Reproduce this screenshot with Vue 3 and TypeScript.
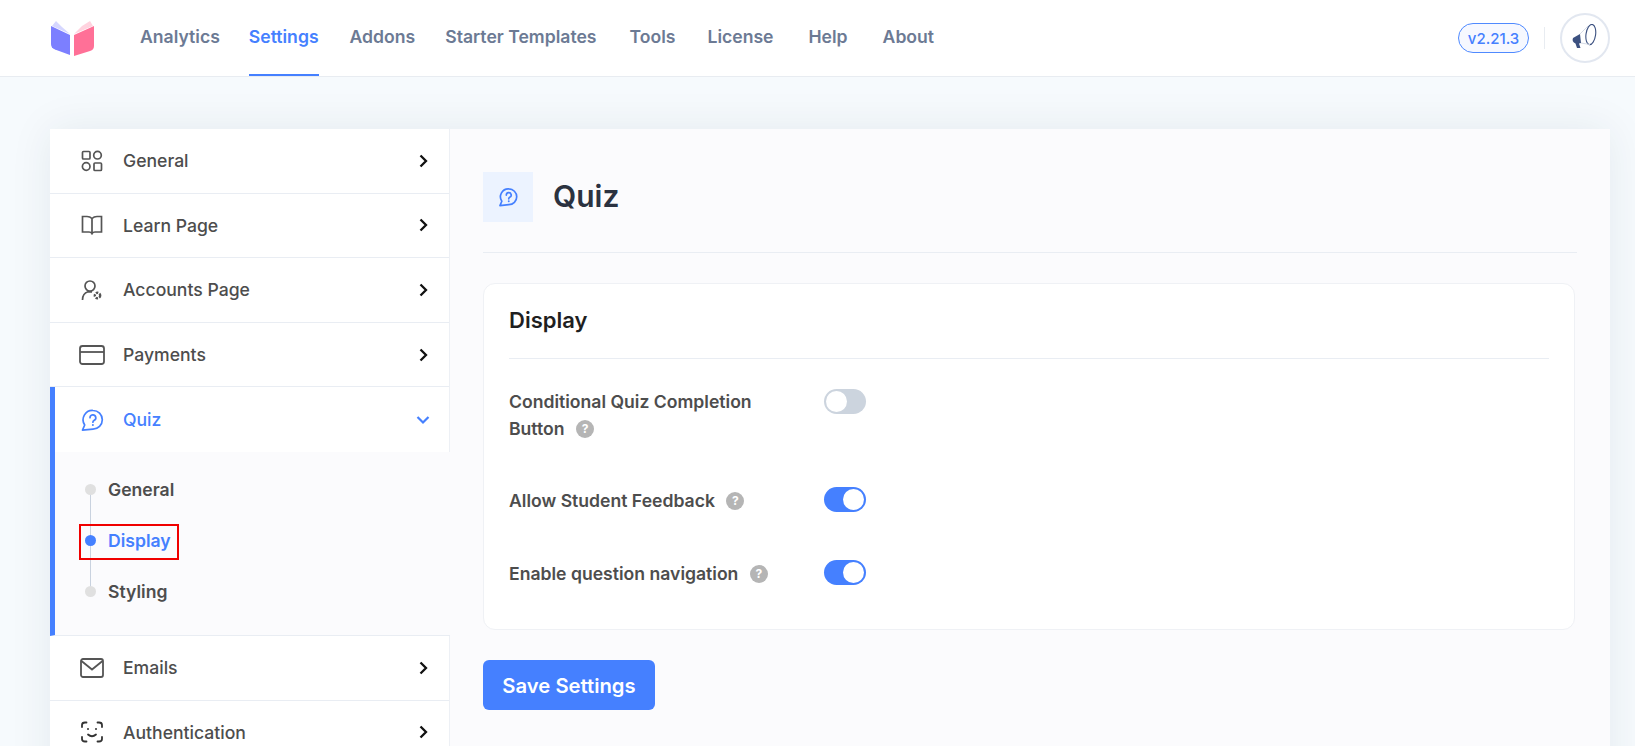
<script setup lang="ts">
interface NavItem { label: string; gap: number; active?: boolean }
const nav: NavItem[] = [
  { label: 'Analytics', gap: 0 },
  { label: 'Settings', gap: 29 },
  { label: 'Addons', gap: 31 },
  { label: 'Starter Templates', gap: 30 },
  { label: 'Tools', gap: 33 },
  { label: 'License', gap: 32 },
  { label: 'Help', gap: 35 },
  { label: 'About', gap: 35 },
]
nav[1].active = true
const topItems = [
  { label: 'General', icon: 'grid' },
  { label: 'Learn Page', icon: 'book' },
  { label: 'Accounts Page', icon: 'user' },
  { label: 'Payments', icon: 'card' },
]
const bottomItems = [
  { label: 'Emails', icon: 'mail' },
  { label: 'Authentication', icon: 'face' },
]
const subItems = [
  { label: 'General', active: false },
  { label: 'Display', active: true },
  { label: 'Styling', active: false },
]
const settings = [
  { label: 'Conditional Quiz Completion Button', on: false, cls: 'first' },
  { label: 'Allow Student Feedback', on: true, cls: 'second' },
  { label: 'Enable question navigation', on: true, cls: 'third' },
]
</script>

<template>
  <div class="page">
    <header class="topbar">
      <svg class="logo" width="44" height="36" viewBox="0 0 44 36" aria-hidden="true">
        <path d="M1 6 L20 15 L20 35 L5 29.500 Q1 28 1 24 Z" fill="#7c7fff" />
        <path d="M44 6 L24 15 L24 36 L40 31 Q44 30 44 26 Z" fill="#ff7097" />
        <path d="M2 6 L6 1 L12 7 L20 14 Z" fill="#d6d7ff" />
        <path d="M43 6 L40 1 L32 6 L24 14 Z" fill="#ffd3df" />
      </svg>
      <nav class="nav">
        <a
          v-for="item in nav"
          :key="item.label"
          class="nav-item"
          :class="{ active: item.active }"
          :style="{ marginLeft: item.gap + 'px' }"
        >{{ item.label }}</a>
      </nav>
      <div class="top-right">
        <span class="version">v2.21.3</span>
        <span class="vline"></span>
        <span class="avatar">
          <svg width="28" height="28" viewBox="0 0 28 28" aria-hidden="true">
            <ellipse cx="19.800" cy="10.500" rx="4.800" ry="10.200" transform="rotate(8 19.800 10.500)" fill="none" stroke="#3c5180" stroke-width="1.100" />
            <path d="M2 14 L9 10 L10 19 L8 19.500 L9.500 24 L6 24 L4.500 19.500 Q0.500 17.500 2 14 Z" fill="#3c5180" />
            <path d="M9 10 L17 2 M10 19 L19 20.500" stroke="#d5dbe6" stroke-width="1" fill="none" />
          </svg>
        </span>
      </div>
    </header>

    <main class="main">
      <div class="panel">
        <aside class="sidebar">
          <a v-for="item in topItems" :key="item.label" class="row">
            <span class="row-icon">
              <svg width="26" height="26" viewBox="0 0 26 26" fill="none" stroke="#555" stroke-width="1.700" aria-hidden="true">
                <template v-if="item.icon === 'grid'">
                  <rect x="3.500" y="3.500" width="7.500" height="7.500" rx="1" />
                  <circle cx="18.500" cy="7.200" r="3.800" />
                  <circle cx="7.200" cy="18.500" r="3.800" />
                  <rect x="15" y="15" width="7.500" height="7.500" rx="1" />
                </template>
                <template v-else-if="item.icon === 'book'">
                  <path d="M13 6.500 Q11 4.500 8 4.500 H3.500 V20 H10 Q12 20 13 21.500 Q14 20 16 20 H22.500 V4.500 H18 Q15 4.500 13 6.500 Z M13 6.500 V22.500" />
                </template>
                <template v-else-if="item.icon === 'user'">
                  <circle cx="11" cy="9" r="5" />
                  <path d="M3.500 23 Q3.500 16.500 9 14.800 L13 14.800" />
                  <circle cx="18.500" cy="18.500" r="2.700" stroke-width="2.400" stroke-dasharray="2.400 1.200" />
                </template>
                <template v-else-if="item.icon === 'card'">
                  <rect x="1" y="4" width="24" height="18" rx="2.500" stroke-width="1.800" />
                  <path d="M1 10 H25" stroke-width="1.800" />
                </template>
              </svg>
            </span>
            <span class="row-label">{{ item.label }}</span>
            <svg class="chev" width="12" height="14" viewBox="0 0 12 14" aria-hidden="true">
              <path d="M2.500 1.500 L8 7 L2.500 12.500" fill="none" stroke="#111" stroke-width="2.300" />
            </svg>
          </a>

          <a class="row row-active">
            <span class="row-icon">
              <svg width="26" height="26" viewBox="0 0 26 26" fill="none" stroke="#4580ff" stroke-width="1.700" aria-hidden="true">
                <path d="M14 3.500 A9.300 9.300 0 1 1 14 22.100 L3.500 23.200 L5.700 18 A9.300 9.300 0 0 1 14 3.500 Z" stroke-linejoin="round" />
                <path d="M11 10.700 A2.900 2.900 0 1 1 15 13.400 Q13.900 14 13.900 15.200" stroke-linecap="round" />
                <circle cx="13.900" cy="18" r="1" fill="#4580ff" stroke="none" />
              </svg>
            </span>
            <span class="row-label">Quiz</span>
            <svg class="chev" width="14" height="12" viewBox="0 0 14 12" aria-hidden="true">
              <path d="M1.500 3 L7 8.500 L12.500 3" fill="none" stroke="#4580ff" stroke-width="2.200" />
            </svg>
          </a>

          <div class="sub">
            <span class="sub-line"></span>
            <a v-for="sub in subItems" :key="sub.label" class="sub-item" :class="{ active: sub.active }">
              <span class="dot"></span>
              <span>{{ sub.label }}</span>
            </a>
            <span class="highlight"></span>
          </div>

          <a v-for="item in bottomItems" :key="item.label" class="row">
            <span class="row-icon">
              <svg width="26" height="26" viewBox="0 0 26 26" fill="none" stroke="#555" stroke-width="1.800" aria-hidden="true">
                <template v-if="item.icon === 'mail'">
                  <rect x="2" y="4" width="22" height="18" rx="2" />
                  <path d="M2.500 6 L13 14.500 L23.500 6" />
                </template>
                <template v-else>
                  <g stroke="#333" stroke-linecap="round">
                    <path d="M3 8 V6 Q3 3.500 6 3.500 H7.500 M18.500 3.500 H20 Q23 3.500 23 6 V8 M23 18 V20 Q23 22.500 20 22.500 H18.500 M7.500 22.500 H6 Q3 22.500 3 20 V18" />
                    <path d="M9 15.500 Q13 19 17 15.500" />
                  </g>
                  <circle cx="9" cy="10" r="1" fill="#333" stroke="none" />
                  <circle cx="17" cy="10" r="1" fill="#333" stroke="none" />
                </template>
              </svg>
            </span>
            <span class="row-label">{{ item.label }}</span>
            <svg class="chev" width="12" height="14" viewBox="0 0 12 14" aria-hidden="true">
              <path d="M2.500 1.500 L8 7 L2.500 12.500" fill="none" stroke="#111" stroke-width="2.300" />
            </svg>
          </a>
        </aside>

        <section class="content">
          <div class="heading">
            <span class="heading-icon">
              <svg width="22" height="22" viewBox="0 0 26 26" fill="none" stroke="#4580ff" stroke-width="2" aria-hidden="true">
                <path d="M14 3.500 A9.300 9.300 0 1 1 14 22.100 L3.500 23.200 L5.700 18 A9.300 9.300 0 0 1 14 3.500 Z" stroke-linejoin="round" />
                <path d="M11 10.700 A2.900 2.900 0 1 1 15 13.400 Q13.900 14 13.900 15.200" stroke-linecap="round" />
                <circle cx="13.900" cy="18" r="1.100" fill="#4580ff" stroke="none" />
              </svg>
            </span>
            <h1 class="title">Quiz</h1>
          </div>

          <div class="card">
            <h2 class="card-title">Display</h2>
            <div v-for="s in settings" :key="s.label" class="setting" :class="s.cls">
              <div class="setting-label">
                {{ s.label }}
                <span class="help">?</span>
              </div>
              <span class="toggle" :class="{ on: s.on }"><span class="knob"></span></span>
            </div>
          </div>

          <button class="save" type="button">Save Settings</button>
        </section>
      </div>
    </main>
  </div>
</template>

<style>
html, body { margin: 0; overflow: hidden; }
</style>

<style scoped>
.page {
  width: 1635px;
  height: 746px;
  overflow: hidden;
  background: #f6fafd;
  font-family: Inter, "Liberation Sans", sans-serif;
}
.topbar {
  height: 76px;
  box-sizing: content-box;
  background: #fff;
  border-bottom: 1px solid #e8ecf1;
  display: flex;
  align-items: stretch;
  padding: 0 25px 0 50px;
}
.logo { align-self: center; margin-right: 46px; }
.nav { display: flex; align-items: stretch; flex: 1; }
.nav-item {
  display: flex;
  align-items: center;
  font-size: 17.600px;
  font-weight: 600;
  color: #6c7a94;
  padding-bottom: 1px;
  box-sizing: border-box;
  border-bottom: 2px solid transparent;
}
.nav-item.active { color: #4580ff; border-bottom-color: #4580ff; }
.top-right { display: flex; align-items: center; }
.version {
  box-sizing: border-box;
  width: 71px;
  height: 30px;
  border: 1.500px solid #4f8aff;
  border-radius: 15px;
  background: #f6f8ff;
  color: #4580ff;
  font-size: 15px;
  font-weight: 500;
  display: flex;
  align-items: center;
  justify-content: center;
}
.vline { width: 1px; height: 22px; background: #e8ecf1; margin: 0 15px; }
.avatar {
  box-sizing: border-box;
  width: 50px;
  height: 50px;
  border: 2px solid #e2e7f0;
  border-radius: 50%;
  display: flex;
  align-items: center;
  justify-content: center;
}
.main { padding: 52px 25px 0 50px; }
.panel {
  display: flex;
  height: 700px;
  background: #fbfbfd;
  box-shadow: 0 0 40px rgba(30, 45, 60, 0.08);
}
.sidebar { width: 400px; flex: none; background: #fff; border-right: 1px solid #edf0f5; box-sizing: border-box; }
.row {
  box-sizing: border-box;
  height: 64.600px;
  display: flex;
  align-items: center;
  padding: 0 19px 0 29px;
  border-bottom: 1px solid #e9edf3;
  color: #4d4d4d;
  font-size: 17.600px;
  font-weight: 500;
}
.row-icon { width: 26px; height: 26px; display: flex; margin-right: 18px; }
.row-label { flex: 1; }
.chev { flex: none; }
.row-active { color: #4580ff; border-left: 5px solid #4580ff; padding-left: 24px; border-bottom: none; }
.sub {
  position: relative;
  box-sizing: border-box;
  height: 184px;
  padding: 12px 0 0 30px;
  background: #fbfbfd;
  border-left: 5px solid #4580ff;
  border-bottom: 1px solid #e9edf3;
  margin-right: -1px;
}
.sub-line {
  position: absolute;
  left: 35px;
  top: 36px;
  width: 1px;
  height: 102px;
  background: #c9d2df;
}
.sub-item {
  position: relative;
  display: flex;
  align-items: center;
  gap: 12px;
  height: 51px;
  font-size: 17.600px;
  font-weight: 600;
  color: #4d4d4d;
}
.dot { width: 11px; height: 11px; border-radius: 50%; background: #e0e0e0; }
.sub-item.active { color: #4580ff; }
.sub-item.active .dot { background: #4580ff; }
.highlight {
  position: absolute;
  left: 24px;
  top: 72px;
  width: 100px;
  height: 36px;
  box-sizing: border-box;
  border: 2px solid #f00000;
}
.content { flex: 1; padding: 43px 33px 0 33px; min-width: 0; }
.heading {
  display: flex;
  align-items: center;
  height: 50px;
  padding-bottom: 30px;
  border-bottom: 1px solid #e9edf3;
}
.heading-icon {
  width: 50px;
  height: 50px;
  background: #ecf3ff;
  display: flex;
  align-items: center;
  justify-content: center;
  margin-right: 20px;
}
.title { margin: 0 0 2px; font-size: 30px; font-weight: 600; color: #2b3240; }
.card {
  box-sizing: border-box;
  height: 347px;
  margin: 30px 2px 0 0;
  background: #fff;
  border: 1px solid #eff1f5;
  border-radius: 12px;
  padding: 0 25px;
}
.card-title {
  margin: 0;
  height: 74px;
  line-height: 72px;
  font-size: 22px;
  font-weight: 600;
  color: #1f1f1f;
  border-bottom: 1px solid #e9edf3;
}
.setting { display: flex; align-items: flex-start; }
.setting-label {
  width: 275px;
  margin-right: 40px;
  font-size: 17.600px;
  font-weight: 600;
  line-height: 27px;
  color: #4d4d4d;
}
.first { margin-top: 30px; }
.first .setting-label { margin-top: -1px; }
.second { margin-top: 45px; }
.third { margin-top: 46px; }
.help {
  display: inline-flex;
  width: 18px;
  height: 18px;
  border-radius: 50%;
  background: #b5b5b5;
  color: #fff;
  font-size: 12px;
  line-height: 18px;
  font-weight: 700;
  align-items: center;
  justify-content: center;
  margin: 5px 0 0 7px;
  vertical-align: top;
}
.toggle {
  box-sizing: border-box;
  width: 42px;
  height: 25px;
  border-radius: 13px;
  background: #ccd4de;
  padding: 2px;
  display: flex;
}
.knob { width: 21px; height: 21px; background: #fff; border-radius: 50%; }
.toggle.on { background: #4580ff; justify-content: flex-end; }
.save {
  display: block;
  margin-top: 30px;
  width: 172px;
  height: 50px;
  border: none;
  border-radius: 6px;
  background: #4580ff;
  color: #fff;
  font-family: inherit;
  font-size: 20.250px;
  font-weight: 600;
}
</style>
